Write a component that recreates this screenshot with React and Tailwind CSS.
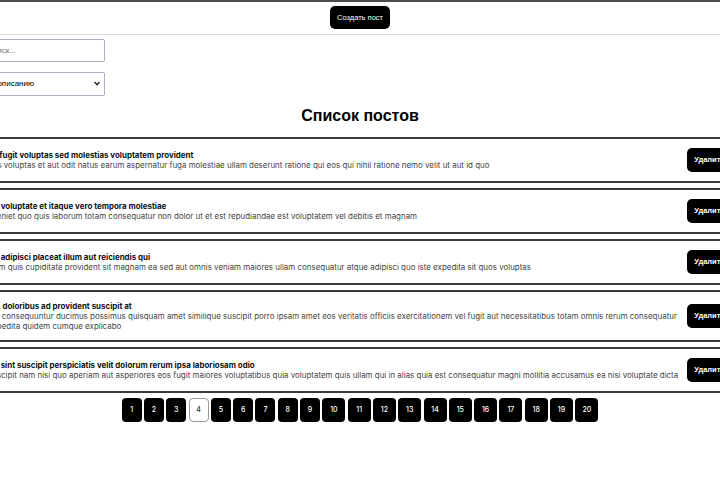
import React from "react";

const posts = [
  {
    id: 17,
    title: "fugit voluptas sed molestias voluptatem provident",
    body: "eos voluptas et aut odit natus earum aspernatur fuga molestiae ullam deserunt ratione qui eos qui nihil ratione nemo velit ut aut id quo",
  },
  {
    id: 18,
    title: "voluptate et itaque vero tempora molestiae",
    body: "eveniet quo quis laborum totam consequatur non dolor ut et est repudiandae est voluptatem vel debitis et magnam",
  },
  {
    id: 19,
    title: "adipisci placeat illum aut reiciendis qui",
    body: "illum quis cupiditate provident sit magnam ea sed aut omnis veniam maiores ullam consequatur atque adipisci quo iste expedita sit quos voluptas",
  },
  {
    id: 20,
    title: "doloribus ad provident suscipit at",
    body: "qui consequuntur ducimus possimus quisquam amet similique suscipit porro ipsam amet eos veritatis officiis exercitationem vel fugit aut necessitatibus totam omnis rerum consequatur expedita quidem cumque explicabo",
  },
  {
    id: 16,
    title: "sint suscipit perspiciatis velit dolorum rerum ipsa laboriosam odio",
    body: "suscipit nam nisi quo aperiam aut asperiores eos fugit maiores voluptatibus quia voluptatem quis ullam qui in alias quia est consequatur magni mollitia accusamus ea nisi voluptate dicta",
  },
];

const pages = Array.from({ length: 20 }, (_, i) => i + 1);

export default function App() {
  return (
    <div className="w-full min-h-screen overflow-hidden bg-white">
      <header className="flex justify-center border-t-2 border-t-[#4d4d4d] border-b border-b-[#d9d9d9] pt-[4px] pb-[5px]">
        <button className="h-[23px] px-[7px] rounded-[5px] bg-black text-white text-[7.5px] font-['Liberation_Sans',Arial,sans-serif]">
          Создать пост
        </button>
      </header>
      <div className="w-[760px] ml-[-20px]">
        <input
          className="mt-[4px] block w-[125px] h-[23px] px-[6px] rounded-[2px] border border-[#a7b3c2] text-[8px] font-['Liberation_Sans',Arial,sans-serif] placeholder:text-[#757575] outline-none"
          placeholder="Поиск..."
        />
        <div className="relative mt-[10px] w-[125px]">
          <select
            className="block w-[125px] h-[24px] px-[4px] appearance-none rounded-[2px] border border-[#a7b3c2] bg-white text-[8px] text-black font-['Liberation_Sans',Arial,sans-serif]"
            defaultValue="body"
          >
            <option value="body">По описанию</option>
            <option value="title">По названию</option>
          </select>
          <svg
            className="absolute right-[5px] top-[9px] w-[6px] h-[5px] pointer-events-none"
            viewBox="0 0 6 5"
          >
            <path d="M0.6 1 L3 3.6 L5.4 1" fill="none" stroke="#222" strokeWidth="1.4" />
          </svg>
        </div>
        <h1 className="mt-[8px] mb-[9px] text-center text-[16px] leading-[24px] font-bold text-black font-['Liberation_Sans',Arial,sans-serif]">
          Список постов
        </h1>
        <div className="flex flex-col gap-[5px]">
          {posts.map((p) => (
            <div
              key={p.id}
              className="flex items-center gap-[1px] border-2 border-[#3a3a3a] px-[6px] py-[9px]"
            >
              <div className="flex-1 min-w-0 font-['Inter',sans-serif] text-[7.95px] leading-[10px]">
                <div className="font-bold text-[#111]">
                  {p.id}. {p.title}
                </div>
                <div className="text-[#444]">{p.body}</div>
              </div>
              <button className="shrink-0 h-[24px] px-[7px] rounded-[5px] bg-black text-white text-[7.5px] font-bold font-['Liberation_Sans',Arial,sans-serif]">
                Удалить
              </button>
            </div>
          ))}
        </div>
        <div className="mt-[5px] flex justify-center gap-[2.3px]">
          {pages.map((n) =>
            n === 4 ? (
              <button
                key={n}
                className="h-[24px] w-[20px] rounded-[4px] border border-[#9a9a9a] bg-white text-[#333] text-[7px] font-medium font-['Inter',sans-serif]"
              >
                {n}
              </button>
            ) : (
              <button
                key={n}
                className={
                  (n < 10 ? "w-[20px]" : "w-[23px]") +
                  " h-[24px] rounded-[4px] bg-black text-white text-[7px] font-medium font-['Inter',sans-serif]"
                }
              >
                {n}
              </button>
            )
          )}
        </div>
      </div>
    </div>
  );
}
